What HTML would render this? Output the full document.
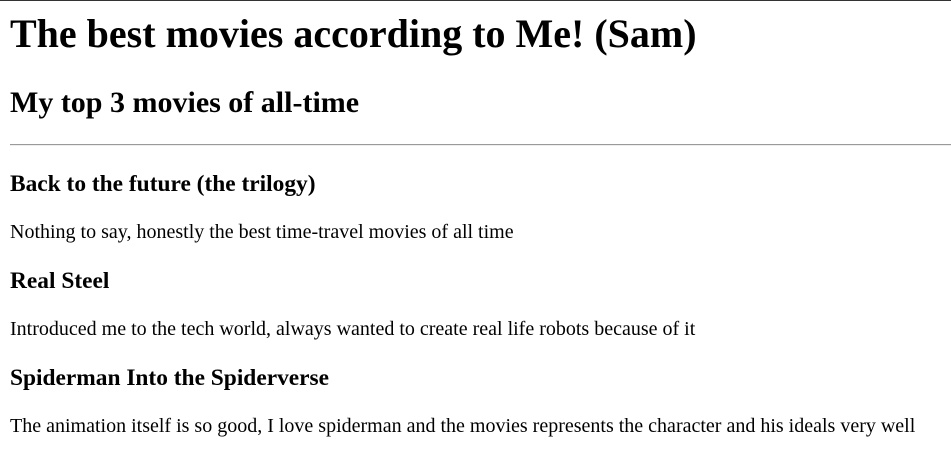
<!DOCTYPE html>
<html><head><style>
html,body{margin:0;padding:0;background:#fff;}
body{border-top:1px solid #333;font-family:"Liberation Serif",serif;color:#000;width:951px;height:475px;overflow:hidden;position:relative;}
.a{position:absolute;left:10px;margin:0;white-space:nowrap;line-height:1.15;}
h1{font-size:40px;font-weight:bold;}
h2{font-size:30px;font-weight:bold;}
h3{font-size:23.4px;font-weight:bold;}
p{font-size:20px;}
.hr{position:absolute;left:10px;right:0;top:143px;height:0;border-top:1px solid #9a9a9a;border-bottom:1px solid #eee;}
</style></head><body>
<h1 class="a" style="top:10px">The best movies according to Me! (Sam)</h1>
<h2 class="a" style="top:85px">My top 3 movies of all-time</h2>
<div class="hr"></div>
<h3 class="a" style="top:170px">Back to the future (the trilogy)</h3>
<p class="a" style="top:220px">Nothing to say, honestly the best time-travel movies of all time</p>
<h3 class="a" style="top:267px">Real Steel</h3>
<p class="a" style="top:317px">Introduced me to the tech world, always wanted to create real life robots because of it</p>
<h3 class="a" style="top:364px">Spiderman Into the Spiderverse</h3>
<p class="a" style="top:414px">The animation itself is so good, I love spiderman and the movies represents the character and his ideals very well</p>
</body></html>
